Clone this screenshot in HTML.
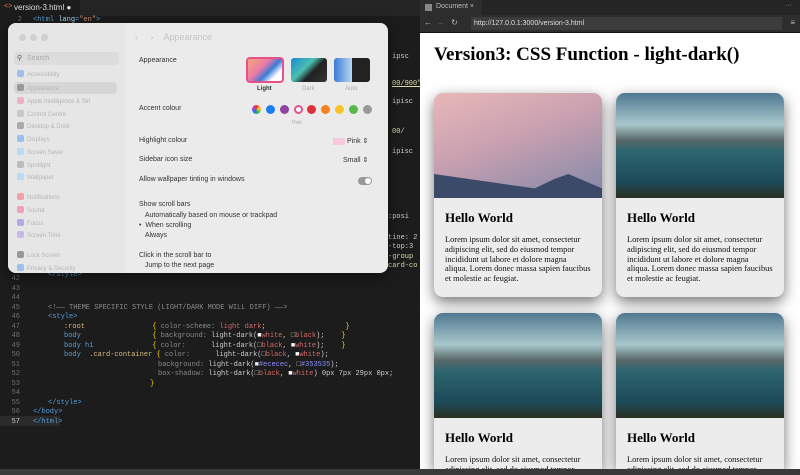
<!DOCTYPE html>
<html><head><meta charset="utf-8">
<style>
*{margin:0;padding:0;box-sizing:border-box}
html,body{width:800px;height:475px;overflow:hidden}
body{background:#1e1e1e;font-family:"Liberation Sans",sans-serif;position:relative}
.mono{font-family:"Liberation Mono",monospace}
#editor{position:absolute;left:0;top:0;width:420px;height:475px;background:#1c1c1c;overflow:hidden}
#tabs{position:absolute;left:0;top:0;width:420px;height:16px;background:#252526}
#tabs .t{position:absolute;left:0;top:0;height:16px;width:80px;background:#1c1c1c;color:#ddd;font-size:8px;line-height:16px;padding-left:14px}
.ln{position:absolute;left:0;width:40px;text-align:right;color:#6e6e6e;font-size:7px}
.cl{position:absolute;font-size:7px;white-space:pre;color:#ccc}
#win{position:absolute;left:8px;top:23px;width:380px;height:250px;background:#ebebeb;border-radius:8px;overflow:hidden;box-shadow:0 4px 14px rgba(0,0,0,.5)}
#side{position:absolute;left:0;top:0;width:117px;height:250px;background:#e6e6e6}
.si{position:absolute;left:9px;font-size:6px;color:#b5b5b5}
.si i{display:inline-block;width:7px;height:7px;border-radius:2px;margin-right:3px;vertical-align:-1px}
.lbl{position:absolute;left:131px;font-size:7px;color:#333}
.dot{position:absolute;top:82px;width:9px;height:9px;border-radius:50%}
#browser{position:absolute;left:420px;top:0;width:380px;height:475px;background:#fff;overflow:hidden}
.card{position:absolute;width:168px;background:#ececec;border-radius:9px;overflow:hidden;box-shadow:0 5px 14px rgba(0,0,0,.55)}
.card.b{border-radius:9px 9px 0 0}
.img{height:105px}
.card h2{font-family:"Liberation Serif",serif;font-size:13px;margin:12px 11px 0}
.card p{font-family:"Liberation Serif",serif;font-size:8.4px;line-height:9.8px;margin:9px 11px 0;color:#111}
#bar{position:absolute;left:0;top:469px;width:800px;height:6px;background:#3a3a3a;z-index:10}
</style></head><body>
<div id="editor">
 <div id="tabs"><div class="t">version-3.html ●</div><span style="position:absolute;left:4px;top:3px;color:#e37933;font-size:7px">&lt;&gt;</span></div>
 <div class="ln mono" style="top:16px;width:22px">2</div>
 <div class="cl mono" style="left:33px;top:16px;color:#569cd6">&lt;html <span style="color:#9cdcfe">lang</span>=<span style="color:#ce9178">"en"</span>&gt;</div>
 <div class="cl mono" style="left:392px;top:53px;color:#ccc">ipsc</div>
 <div class="cl mono" style="left:392px;top:80px;color:#dcdcaa;text-decoration:underline">00/900"</div>
 <div class="cl mono" style="left:392px;top:98px">ipisc</div>
 <div class="cl mono" style="left:392px;top:128px;color:#dcdcaa">00/</div>
 <div class="cl mono" style="left:392px;top:148px">ipisc</div>
 <div class="cl mono" style="left:388px;top:213px">:posi</div>
 <div class="cl mono" style="left:388px;top:234px">tine: 2</div>
 <div class="cl mono" style="left:388px;top:243px">-top:3</div>
 <div class="cl mono" style="left:388px;top:253px;color:#dcdcaa">-group</div>
 <div class="cl mono" style="left:388px;top:262px;color:#dcdcaa">card-co</div>
 <div class="ln mono" style="top:275px;width:20px">42</div>
 <div class="cl mono" style="left:48px;top:271px;color:#569cd6">&lt;/style&gt;</div>
 <div class="ln mono" style="top:285px;width:20px">43</div>
 <div class="ln mono" style="top:294px;width:20px">44</div>
 <div class="ln mono" style="top:304px;width:20px">45</div><div class="cl mono" style="left:48px;top:304px;color:#8a8a8a">&lt;!—— THEME SPECIFIC STYLE (LIGHT/DARK MODE WILL DIFF) ——&gt;</div>
 <div class="ln mono" style="top:313px;width:20px">46</div><div class="cl mono" style="left:48px;top:313px;color:#569cd6">&lt;style&gt;</div>
 <div class="ln mono" style="top:323px;width:20px">47</div><div class="cl mono" style="left:64px;top:323px"><span style="color:#d7ba7d">:root</span>                <span style="color:#ffd700">{</span> <span style="color:#888">color-scheme:</span> <span style="color:#d16969">light dark</span>;                   <span style="color:#ffd700">}</span></div>
 <div class="ln mono" style="top:332px;width:20px">48</div><div class="cl mono" style="left:64px;top:332px"><span style="color:#569cd6">body</span>                 <span style="color:#ffd700">{</span> <span style="color:#888">background:</span> light-dark(<span style="color:#fff">■</span><span style="color:#d16969">white</span>, □<span style="color:#d16969">black</span>);    <span style="color:#ffd700">}</span></div>
 <div class="ln mono" style="top:342px;width:20px">49</div><div class="cl mono" style="left:64px;top:342px"><span style="color:#569cd6">body h1</span>              <span style="color:#ffd700">{</span> <span style="color:#888">color:</span>      light-dark(□<span style="color:#d16969">black</span>, <span style="color:#fff">■</span><span style="color:#d16969">white</span>);    <span style="color:#ffd700">}</span></div>
 <div class="ln mono" style="top:351px;width:20px">50</div><div class="cl mono" style="left:64px;top:351px"><span style="color:#569cd6">body</span>  <span style="color:#d7ba7d">.card-container</span> <span style="color:#ffd700">{</span> <span style="color:#888">color:</span>      light-dark(□<span style="color:#d16969">black</span>, <span style="color:#fff">■</span><span style="color:#d16969">white</span>);</div>
 <div class="ln mono" style="top:361px;width:20px">51</div><div class="cl mono" style="left:158px;top:361px"><span style="color:#888">background:</span> light-dark(<span style="color:#ececec">■</span><span style="color:#8c8cff">#ececec</span>, □<span style="color:#8c8cff">#353535</span>);</div>
 <div class="ln mono" style="top:370px;width:20px">52</div><div class="cl mono" style="left:158px;top:370px"><span style="color:#888">box-shadow:</span> light-dark(□<span style="color:#d16969">black</span>, <span style="color:#fff">■</span><span style="color:#d16969">white</span>) 0px 7px 29px 0px;</div>
 <div class="ln mono" style="top:380px;width:20px">53</div><div class="cl mono" style="left:150px;top:380px;color:#ffd700">}</div>
 <div class="ln mono" style="top:389px;width:20px">54</div>
 <div class="ln mono" style="top:399px;width:20px">55</div><div class="cl mono" style="left:48px;top:399px;color:#569cd6">&lt;/style&gt;</div>
 <div class="ln mono" style="top:408px;width:20px">56</div><div class="cl mono" style="left:33px;top:408px;color:#569cd6">&lt;/body&gt;</div>
 <div style="position:absolute;left:0;top:416px;width:60px;height:10px;background:#2a2a2a"></div>
 <div class="ln mono" style="top:418px;width:20px;color:#ccc">57</div><div class="cl mono" style="left:33px;top:418px;color:#569cd6">&lt;/html&gt;</div>
</div>

<div id="win">
 <div id="side">
  <span style="position:absolute;left:11px;top:11px;width:7px;height:7px;border-radius:50%;background:#d0d0d0"></span>
  <span style="position:absolute;left:22px;top:11px;width:7px;height:7px;border-radius:50%;background:#d0d0d0"></span>
  <span style="position:absolute;left:33px;top:11px;width:7px;height:7px;border-radius:50%;background:#d0d0d0"></span>
  <div style="position:absolute;left:6px;top:29px;width:105px;height:13px;background:#dcdcdc;border-radius:4px;font-size:7px;color:#aaa;line-height:13px;padding-left:13px">Search<span style="position:absolute;left:3px;top:0;color:#555">⚲</span></div>
  <div class="si" style="top:47px"><i style="background:#9cc0ee"></i>Accessibility</div>
  <div style="position:absolute;left:6px;top:59px;width:103px;height:12px;background:#d6d6d6;border-radius:4px"></div>
  <div class="si" style="top:61px"><i style="background:#999"></i>Appearance</div>
  <div class="si" style="top:74px"><i style="background:#f0b0c8"></i>Apple Intelligence &amp; Siri</div>
  <div class="si" style="top:87px"><i style="background:#c8c8c8"></i>Control Centre</div>
  <div class="si" style="top:99px"><i style="background:#aaa"></i>Desktop &amp; Dock</div>
  <div class="si" style="top:112px"><i style="background:#9cc0ee"></i>Displays</div>
  <div class="si" style="top:125px"><i style="background:#b8daf4"></i>Screen Saver</div>
  <div class="si" style="top:138px"><i style="background:#bbb"></i>Spotlight</div>
  <div class="si" style="top:150px"><i style="background:#b8daf4"></i>Wallpaper</div>
  <div class="si" style="top:170px"><i style="background:#f0a0a8"></i>Notifications</div>
  <div class="si" style="top:183px"><i style="background:#f0a0b8"></i>Sound</div>
  <div class="si" style="top:196px"><i style="background:#b8a8e8"></i>Focus</div>
  <div class="si" style="top:208px"><i style="background:#c8b8e8"></i>Screen Time</div>
  <div class="si" style="top:228px"><i style="background:#999"></i>Lock Screen</div>
  <div class="si" style="top:241px"><i style="background:#9cc0ee"></i>Privacy &amp; Security</div>
 </div>
 <div style="position:absolute;left:127px;top:9px;font-size:9px;color:#c4c4c4">‹&nbsp;&nbsp;&nbsp;&nbsp;&nbsp;›&nbsp;&nbsp;&nbsp;&nbsp;Appearance</div>
 <div class="lbl" style="top:34px">Appearance</div>
 <div style="position:absolute;left:238px;top:34px;width:38px;height:26px;border:2px solid #e8508a;border-radius:4px;background:linear-gradient(135deg,#f4a878,#e87aa8 40%,#3a7ad8 60%,#fff 80%)"></div>
 <div style="position:absolute;left:283px;top:35px;width:36px;height:24px;border-radius:3px;background:linear-gradient(135deg,#1a8ad0,#4ac0b0 40%,#222 60%,#333)"></div>
 <div style="position:absolute;left:326px;top:35px;width:36px;height:24px;border-radius:3px;background:linear-gradient(90deg,#3a7ad8,#b8d8f0 50%,#222 50%)"></div>
 <div style="position:absolute;left:249px;top:63px;font-size:6px;color:#333;font-weight:bold">Light</div>
 <div style="position:absolute;left:294px;top:63px;font-size:6px;color:#aaa">Dark</div>
 <div style="position:absolute;left:337px;top:63px;font-size:6px;color:#aaa">Auto</div>
 <div class="lbl" style="top:82px">Accent colour</div>
 <div class="dot" style="left:244px;background:conic-gradient(#e33,#fc3,#4b4,#27e,#a4c,#e33)"></div>
 <div class="dot" style="left:258px;background:#1a7ef0"></div>
 <div class="dot" style="left:272px;background:#8e44a0"></div>
 <div class="dot" style="left:286px;background:#fff;border:2.5px solid #e8508a"></div>
 <div class="dot" style="left:299px;background:#e0303a"></div>
 <div class="dot" style="left:313px;background:#f58220"></div>
 <div class="dot" style="left:327px;background:#f8c428"></div>
 <div class="dot" style="left:341px;background:#58b848"></div>
 <div class="dot" style="left:355px;background:#999"></div>
 <div style="position:absolute;left:284px;top:97px;font-size:5px;color:#aaa">Pink</div>
 <div class="lbl" style="top:114px">Highlight colour</div>
 <div style="position:absolute;left:325px;top:115px;width:12px;height:7px;background:#f8c8e0"></div>
 <div style="position:absolute;left:339px;top:114px;font-size:7px;color:#333">Pink ⇕</div>
 <div class="lbl" style="top:133px">Sidebar icon size</div>
 <div style="position:absolute;left:335px;top:133px;font-size:7px;color:#333">Small ⇕</div>
 <div class="lbl" style="top:153px">Allow wallpaper tinting in windows</div>
 <div style="position:absolute;left:350px;top:154px;width:14px;height:8px;border-radius:4px;background:#999"><span style="position:absolute;right:1px;top:1px;width:6px;height:6px;border-radius:50%;background:#fff"></span></div>
 <div class="lbl" style="top:178px">Show scroll bars</div>
 <div class="lbl" style="top:189px">&nbsp;&nbsp;&nbsp;Automatically based on mouse or trackpad</div>
 <div class="lbl" style="top:199px">•&nbsp;&nbsp;When scrolling</div>
 <div class="lbl" style="top:209px">&nbsp;&nbsp;&nbsp;Always</div>
 <div class="lbl" style="top:229px">Click in the scroll bar to</div>
 <div class="lbl" style="top:239px">&nbsp;&nbsp;&nbsp;Jump to the next page</div>
</div>

<div id="browser">
 <div style="position:absolute;left:0;top:0;width:380px;height:15px;background:#252526"><div style="position:absolute;left:0;top:0;width:62px;height:15px;background:#2d2d2d;color:#bbb;font-size:7px;line-height:14px;padding-left:16px">Document ×</div><span style="position:absolute;left:5px;top:4px;width:7px;height:7px;background:#888"></span><span style="position:absolute;right:8px;top:2px;color:#999;font-size:7px">···</span></div>
 <div style="position:absolute;left:0;top:15px;width:380px;height:18px;background:#2d2d2d;border-bottom:1px solid #111">
  <span style="position:absolute;left:4px;top:3px;color:#bbb;font-size:8px">←&nbsp;&nbsp;<span style="color:#666">→</span>&nbsp;&nbsp;&nbsp;↻</span>
  <div style="position:absolute;left:51px;top:2px;width:311px;height:13px;background:#3c3c3c;color:#ddd;font-size:7px;line-height:13px;padding-left:3px">http://127.0.0.1:3000/version-3.html</div>
  <span style="position:absolute;right:5px;top:3px;color:#bbb;font-size:8px">≡</span>
 </div>
 <div style="position:absolute;left:14px;top:44px;font-family:'Liberation Serif',serif;font-weight:bold;font-size:19px;color:#000">Version3: CSS Function - light-dark()</div>
 <div class="card" style="left:14px;top:93px;height:204px"><div class="img" style="background:linear-gradient(160deg,#e8b8b8,#c8a0b0 45%,#8088a8),#ccc;position:relative"><div style="position:absolute;left:0;bottom:0;width:100%;height:24px;background:#3c4a6a;clip-path:polygon(0 0,40% 40%,60% 60%,72% 20%,80% 0,100% 60%,100% 100%,0 100%)"></div></div><h2>Hello World</h2><p>Lorem ipsum dolor sit amet, consectetur adipiscing elit, sed do eiusmod tempor incididunt ut labore et dolore magna aliqua. Lorem donec massa sapien faucibus et molestie ac feugiat.</p></div>
 <div class="card" style="left:196px;top:93px;height:204px"><div class="img" style="background:linear-gradient(180deg,#507890 0%,#a8c8cc 30%,#5a6868 45%,#2e6670 55%,#1d4a58 85%,#2a3020 100%)"></div><h2>Hello World</h2><p>Lorem ipsum dolor sit amet, consectetur adipiscing elit, sed do eiusmod tempor incididunt ut labore et dolore magna aliqua. Lorem donec massa sapien faucibus et molestie ac feugiat.</p></div>
 <div class="card b" style="left:14px;top:313px;height:156px"><div class="img" style="background:linear-gradient(180deg,#507890 0%,#a8c8cc 30%,#5a6868 45%,#2e6670 55%,#1d4a58 85%,#2a3020 100%)"></div><h2>Hello World</h2><p>Lorem ipsum dolor sit amet, consectetur adipiscing elit, sed do eiusmod tempor</p></div>
 <div class="card b" style="left:196px;top:313px;height:156px"><div class="img" style="background:linear-gradient(180deg,#507890 0%,#a8c8cc 30%,#5a6868 45%,#2e6670 55%,#1d4a58 85%,#2a3020 100%)"></div><h2>Hello World</h2><p>Lorem ipsum dolor sit amet, consectetur adipiscing elit, sed do eiusmod tempor</p></div>
</div>
<div id="bar"></div>
</body></html>
